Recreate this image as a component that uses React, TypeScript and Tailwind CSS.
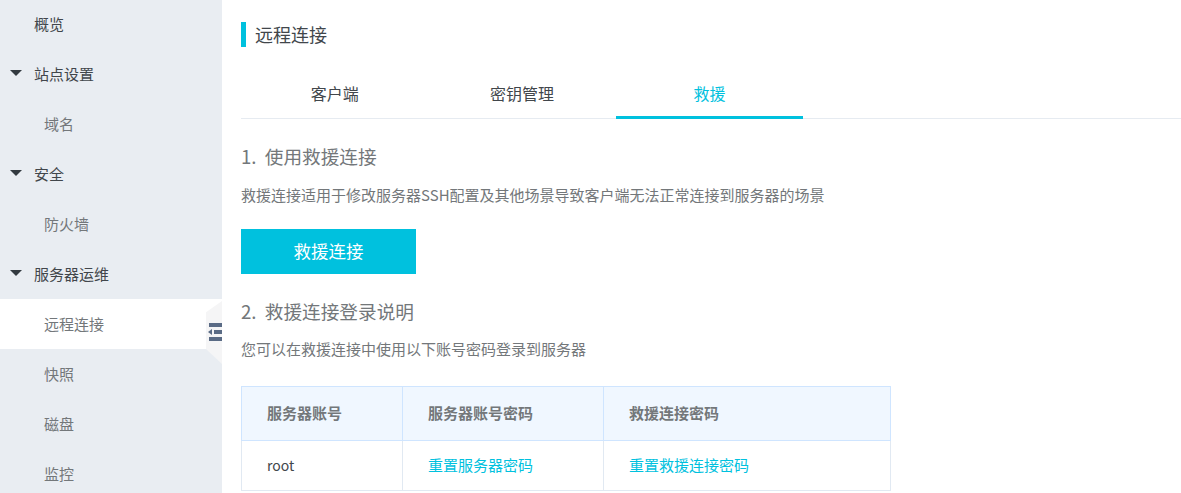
import React from 'react'

const font = "font-['Microsoft_YaHei','Noto_Sans_CJK_SC','Noto_Sans',sans-serif]"

type NavItem = { label: string; kind: 'top' | 'group' | 'child'; active?: boolean }

const navItems: NavItem[] = [
  { label: '概览', kind: 'top' },
  { label: '站点设置', kind: 'group' },
  { label: '域名', kind: 'child' },
  { label: '安全', kind: 'group' },
  { label: '防火墙', kind: 'child' },
  { label: '服务器运维', kind: 'group' },
  { label: '远程连接', kind: 'child', active: true },
  { label: '快照', kind: 'child' },
  { label: '磁盘', kind: 'child' },
  { label: '监控', kind: 'child' },
]

const Sidebar = () => (
  <aside className="relative w-[222px] shrink-0 bg-[#e9edf2]">
    <div className="-mt-px">
      {navItems.map((item) => (
        <div
          key={item.label}
          className={`relative flex h-[50px] items-center text-[15px] ${item.kind === 'child' ? 'pl-[44px] text-[#73777a]' : 'pl-[34px] text-[#41464b]'} ${item.active ? 'bg-white' : ''}`}
        >
          {item.kind === 'group' && (
            <span className="absolute left-[10px] top-[21px] h-0 w-0 border-x-[6px] border-t-[6px] border-x-transparent border-t-[#333a40]" />
          )}
          {item.label}
        </div>
      ))}
    </div>
    <div className="absolute left-[206px] top-[301px] h-[63px] w-4 bg-[#f5f5f6] [clip-path:polygon(100%_0,100%_100%,0_76%,0_18%)]">
      <svg width="16" height="63" viewBox="0 0 16 63" className="block">
        <rect x="3" y="22" width="13" height="4" fill="#5a6b85" />
        <rect x="8" y="29" width="8" height="4" fill="#5a6b85" />
        <path d="M2 31 L6 28 V34 Z" fill="#5a6b85" />
        <rect x="3" y="36" width="13" height="4" fill="#5a6b85" />
      </svg>
    </div>
  </aside>
)

const tabs = ['客户端', '密钥管理', '救援']

const Tabs = () => (
  <div className="mt-[23px] flex h-[49px] border-b border-[#e6ebf1]">
    {tabs.map((tab, i) => (
      <div
        key={tab}
        className={`flex h-[49px] w-[187.4px] items-center justify-center border-b-[3px] text-base ${i === 2 ? 'border-[#00c1de] text-[#00c1de]' : 'border-transparent text-[#41464b]'}`}
      >
        {tab}
      </div>
    ))}
  </div>
)

const InfoTable = () => (
  <table className="mt-[25px] w-[650px] table-fixed border-collapse text-[15px]">
    <colgroup>
      <col className="w-[161px]" />
      <col className="w-[201px]" />
      <col />
    </colgroup>
    <thead>
      <tr className="h-[54px] bg-[#f0f7ff] text-[#73777a]">
        <th className="border border-[#cfe5ff] pl-[25px] text-left font-bold">服务器账号</th>
        <th className="border border-[#cfe5ff] pl-[25px] text-left font-bold">服务器账号密码</th>
        <th className="border border-[#cfe5ff] pl-[25px] text-left font-bold">救援连接密码</th>
      </tr>
    </thead>
    <tbody>
      <tr className="h-[50px]">
        <td className="border border-[#e1e9f2] pb-px pl-[25px] text-sm text-[#41464b]">root</td>
        <td className="border border-[#e1e9f2] pb-px pl-[25px] text-[#00c1de]">重置服务器密码</td>
        <td className="border border-[#e1e9f2] pb-px pl-[25px] text-[#00c1de]">重置救援连接密码</td>
      </tr>
    </tbody>
  </table>
)

export default function App() {
  return (
    <div className={`flex h-[493px] w-[1181px] overflow-hidden bg-white ${font}`}>
      <Sidebar />
      <main className="flex-1 pl-[19px]">
        <div className="mt-[22px] flex h-[25px] items-center border-l-[5px] border-[#00c1de] pb-[2px] pl-[9px] text-lg text-[#41464b]">
          远程连接
        </div>
        <Tabs />
        <h2 className="mt-[24px] text-[18.67px] leading-[26px] text-[#73777a]">
          <span className="mr-[4px]">1.</span> 使用救援连接
        </h2>
        <p className="mt-[14px] text-[15px] leading-[24px] text-[#73777a]">
          救援连接适用于修改服务器SSH配置及其他场景导致客户端无法正常连接到服务器的场景
        </p>
        <button className="mt-[22px] flex h-[45px] w-[175px] items-center justify-center bg-[#00c1de] pb-[1px] text-[17.5px] text-white">
          救援连接
        </button>
        <h2 className="mt-[24px] text-[18.67px] leading-[26px] text-[#73777a]">
          <span className="mr-[4px]">2.</span> 救援连接登录说明
        </h2>
        <p className="mt-[13px] text-[15px] leading-[24px] text-[#73777a]">您可以在救援连接中使用以下账号密码登录到服务器</p>
        <InfoTable />
      </main>
    </div>
  )
}
